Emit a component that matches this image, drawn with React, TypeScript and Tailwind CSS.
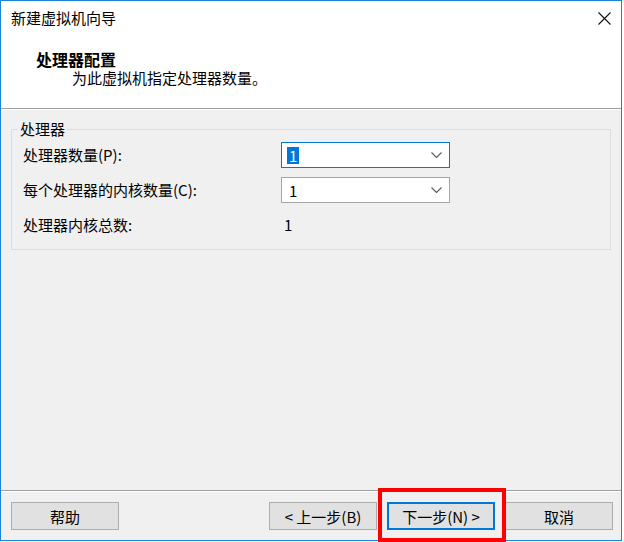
import React from "react";

const font = { fontFamily: '"Noto Sans CJK SC", "Noto Sans", sans-serif' };

function Chevron() {
  return (
    <svg width="11" height="6" viewBox="0 0 11 6" className="shrink-0">
      <path d="M0.5 0.5 L5.5 5.5 L10.5 0.5" fill="none" stroke="#5a5a5a" strokeWidth="1.1" />
    </svg>
  );
}

function Combo({ focused }: { focused?: boolean }) {
  return (
    <div
      className={
        "flex h-[26px] w-[169px] items-center justify-between bg-white pl-[5px] pr-[7px] " +
        (focused ? "border border-[#0078d7]" : "border border-[#a6a6a6]")
      }
    >
      {focused ? (
        <span className="flex h-[17px] items-center bg-[#0078d7] px-[2px] text-[15px] leading-[17px] text-white">1</span>
      ) : (
        <span className="pl-[2px] text-[15px] leading-[17px] text-black">1</span>
      )}
      <Chevron />
    </div>
  );
}

function Button({ label, primary }: { label: React.ReactNode; primary?: boolean }) {
  return (
    <button
      className={
        "flex h-[28px] w-[108px] items-center justify-center bg-[#e1e1e1] text-[15px] leading-none text-black " +
        (primary ? "border-2 border-[#0078d7]" : "border border-[#adadad]")
      }
    >
      {label}
    </button>
  );
}

export default function App() {
  return (
    <div className="relative h-[542px] w-[624px] bg-white" style={font}>
      <div className="flex h-[541px] w-[622px] flex-col border border-[#1883d7]">
        {/* title bar + header */}
        <div className="h-[107px] bg-white">
          <div className="flex h-[34px] items-center justify-between pl-[10px] pr-[10px]">
            <span className="text-[15px] leading-[18px] text-black">新建虚拟机向导</span>
            <svg width="13" height="13" viewBox="0 0 13 13">
              <path d="M0.5 0.5 L12.5 12.5 M12.5 0.5 L0.5 12.5" stroke="#111" strokeWidth="1.1" />
            </svg>
          </div>
          <div className="pl-[35px] pt-[15px]">
            <div className="text-[16px] font-bold leading-[18px] text-black">处理器配置</div>
            <div className="pl-[36px] pt-[1px] text-[15px] leading-[18px] text-black">为此虚拟机指定处理器数量。</div>
          </div>
        </div>
        <div className="h-px bg-[#a0a0a0]" />
        <div className="h-px bg-white" />

        {/* body */}
        <div className="flex flex-1 flex-col bg-[#f0f0f0] px-[10px] pt-[10px]">
          <fieldset className="border border-[#dcdcdc] pb-[11px] pt-[4px]">
            <legend className="ml-[6px] px-[2px] text-[15px] leading-[18px] text-black">处理器</legend>
            <div className="grid grid-cols-[258px_169px] gap-y-[9px] pl-[11px] text-[15px] text-black">
              <div className="flex h-[26px] items-center">处理器数量(P):</div>
              <Combo focused />
              <div className="flex h-[26px] items-center">每个处理器的内核数量(C):</div>
              <Combo />
              <div className="flex h-[26px] items-center">处理器内核总数:</div>
              <div className="flex h-[26px] items-center pl-[3px]">1</div>
            </div>
          </fieldset>
        </div>

        {/* footer */}
        <div className="h-px bg-[#a0a0a0]" />
        <div className="h-px bg-white" />
        <div className="flex h-[48px] items-start justify-between bg-[#f0f0f0] pl-[10px] pr-[8px] pt-[10px]">
          <Button label="帮助" />
          <div className="flex gap-[10px]">
            <Button label="< 上一步(B)" />
            <Button label="下一步(N) >" primary />
            <Button label="取消" />
          </div>
        </div>
      </div>

      {/* red annotation box */}
      <div className="absolute left-[378px] top-[488px] h-[54px] w-[128px] border-[4px] border-[#ff0000]" />
    </div>
  );
}
